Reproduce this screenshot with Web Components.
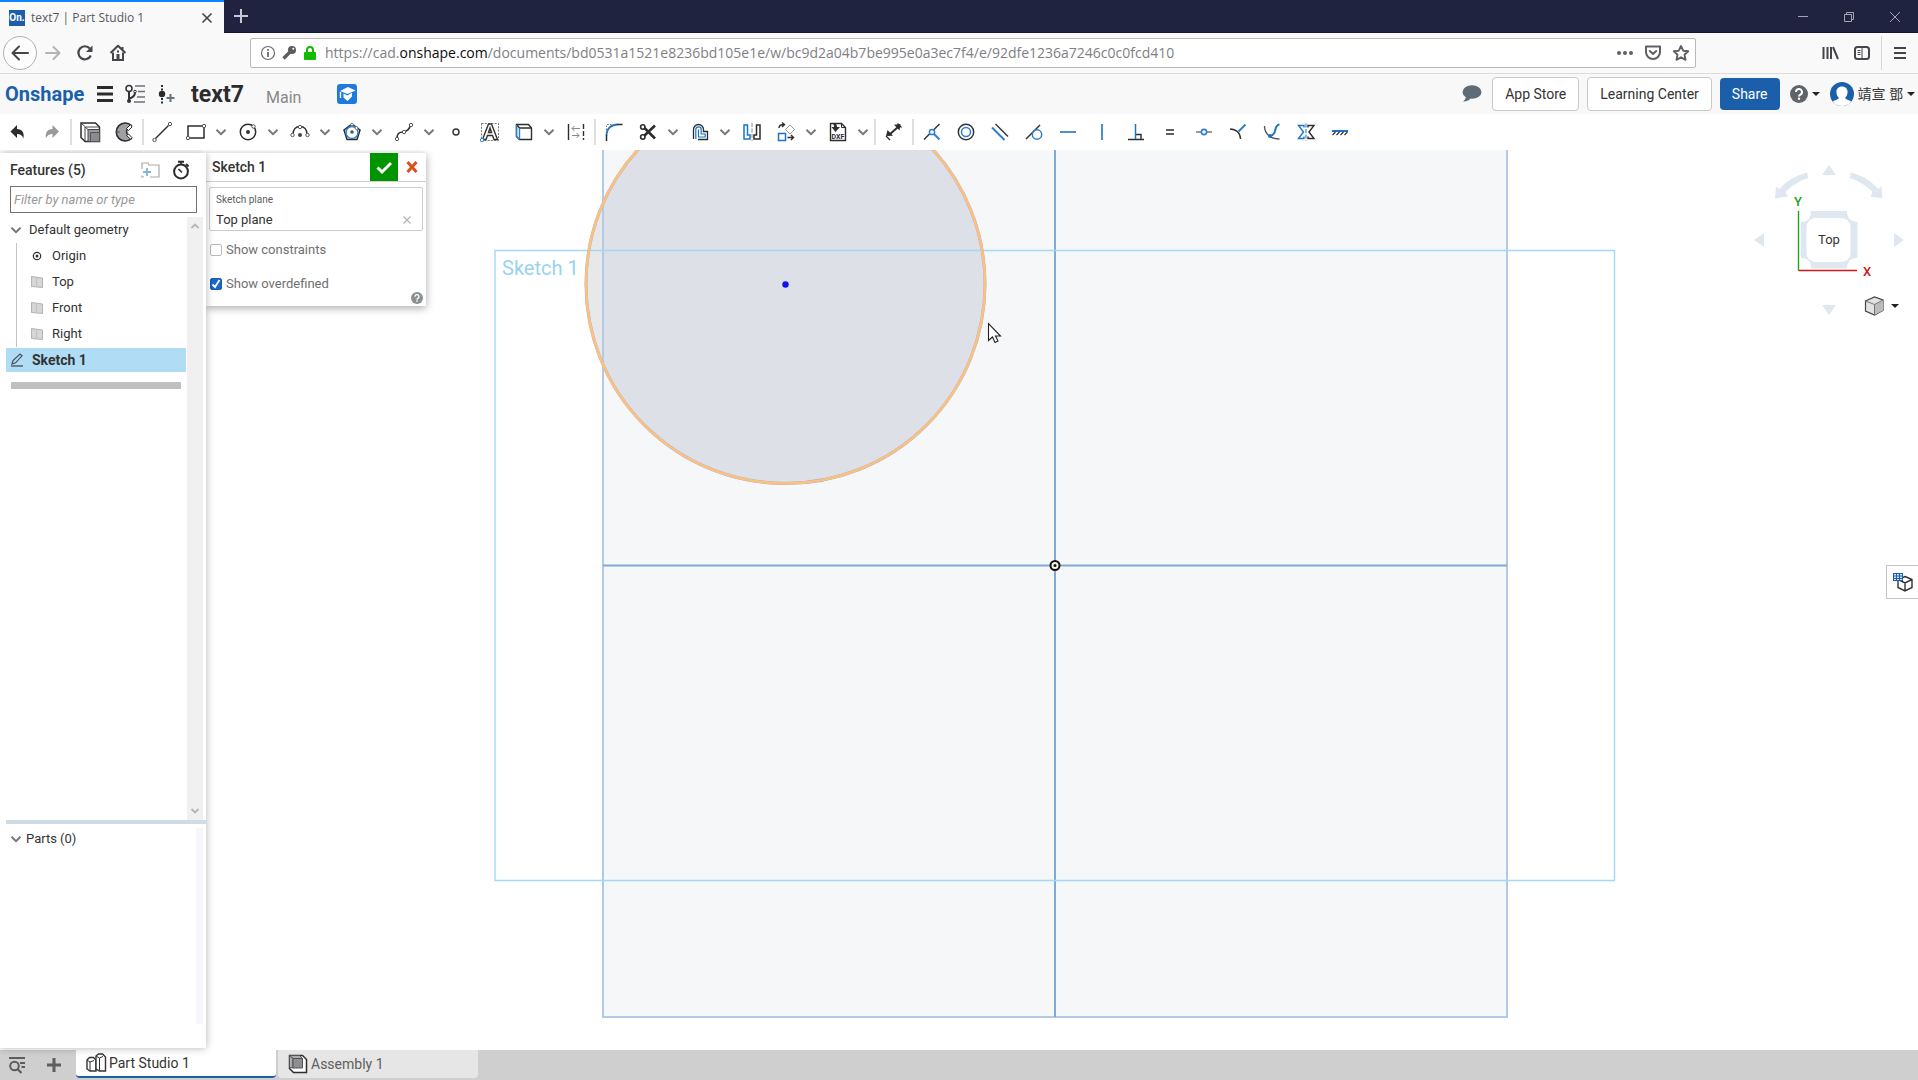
<!DOCTYPE html>
<html lang="en">
<head>
<meta charset="utf-8">
<title>text7 | Part Studio 1</title>
<style>
html, body { margin: 0; height: 100%; }
body { font: 14px/20px Roboto, "Noto Sans CJK TC", sans-serif; color: #333; background: #fff; overflow: hidden; }
</style>
</head>
<body>
<app-window></app-window>
<script>
const ICONS = {
  close: [12, '<path d="M1.5 1.5l9 9M10.5 1.5l-9 9" stroke="#444" stroke-width="1.6"/>'],
  plus: [16, '<path d="M8 1v14M1 8h14" stroke="#c8c8d0" stroke-width="2"/>'],
  min: [12, '<path d="M1 5.5h10" stroke="#a4a5b2"/>'],
  restore: [12, '<path d="M1.5 3.5h7v7h-7zM3.5 3.500V1.500h7v7h-2" stroke="#a4a5b2"/>'],
  xwin: [12, '<path d="M1 1l10 10M11 1L1 11" stroke="#a4a5b2"/>'],
  back: [34, '<circle cx="17" cy="17" r="16.500" fill="#fcfcfc" stroke="#b1b1b3"/><path d="M25 17H10M16 10.500L9.500 17l6.500 6.500" stroke="#45454a" stroke-width="2" stroke-linecap="round" stroke-linejoin="round"/>'],
  fwd: [16, '<path d="M1 8h13M8.500 2l6 6-6 6" stroke="#b4b4b7" stroke-width="2" stroke-linecap="round" stroke-linejoin="round"/>'],
  reload: [18, '<path d="M14.800 11.500A6.500 6.500 0 1 1 13.800 4.500" stroke="#45454a" stroke-width="2.200"/><path d="M16.500 1.500v6.500h-6.500z" fill="#45454a"/>'],
  home: [18, '<path d="M1.500 9L9 1.800 16.500 9M13.500 3v3" stroke="#45454a" stroke-width="2" stroke-linejoin="round"/><path d="M4 8.500V16h10V8.500" stroke="#45454a" stroke-width="2"/><rect x="7.500" y="10" width="3" height="6" fill="#45454a"/><rect x="8" y="6.500" width="2" height="2" fill="#45454a"/>'],
  info: [16, '<circle cx="8" cy="8" r="6.500" stroke="#6a6a6a" stroke-width="1.200"/><path d="M8 7v5M8 4v1.700" stroke="#6a6a6a" stroke-width="1.800"/>'],
  key: [16, '<circle cx="11" cy="5" r="4" fill="#5c5c60"/><path d="M8.500 7.500L2.500 13.500" stroke="#5c5c60" stroke-width="3.400"/><circle cx="12.300" cy="3.800" r="1" fill="#fff"/>'],
  lock: [16, '<path d="M5 8V5a3 3 0 0 1 6 0v3" stroke="#12bc00" stroke-width="2"/><rect x="2" y="7" width="12" height="8" rx="1" fill="#12bc00"/>'],
  dots: [18, '<g fill="#606064"><circle cx="3" cy="9" r="2"/><circle cx="9" cy="9" r="2"/><circle cx="15" cy="9" r="2"/></g>'],
  pocket: [18, '<path d="M2 2.500h14V8a7 7 0 0 1-14 0z" stroke="#606064" stroke-width="2" stroke-linejoin="round"/><path d="M5.800 7L9 10l3.200-3" stroke="#606064" stroke-width="2" stroke-linecap="round"/>'],
  star: [18, '<path d="M9 2l2.200 4.700 5 .6-3.700 3.500 1 5L9 13.300 4.500 15.800l1-5L1.800 7.300l5-.6z" stroke="#606064" stroke-width="1.900" stroke-linejoin="round"/>'],
  library: [18, '<path d="M2.500 3v12M6.500 3v12M10 3v12M12 3l5 12" stroke="#45454a" stroke-width="2"/>'],
  sidebar: [18, '<rect x="2" y="3" width="14" height="12" rx="2.500" stroke="#45454a" stroke-width="2"/><path d="M9 3v12M4.500 6.500h3M4.500 8.500h3M4.500 10.500h3" stroke="#45454a"/>'],
  menu: [16, '<path d="M2 3h12M2 8h12M2 13h12" stroke="#45454a" stroke-width="2"/>'],
  burger: [18, '<path d="M1 2.500h16M1 9h16M1 15.500h16" stroke="#2c2c2c" stroke-width="3"/>'],
  tree: [20, '<circle cx="4" cy="4.500" r="3" stroke="#333" stroke-width="1.500"/><circle cx="10" cy="7.500" r="1.300" stroke="#333"/><path d="M4 7.500V17M4 14.500c4-1 6-3 6-6" stroke="#333" stroke-width="2"/><circle cx="4" cy="17" r="2" fill="#333"/><path d="M10 2h10M13 7.500h7M12 13h8M9 18h11" stroke="#687078" stroke-width="1.600"/>'],
  insert: [20, '<circle cx="6" cy="10" r="3.200" fill="#2c2c2c"/><path d="M6 1v2M6 4.500v2M6 14v2M6 17.500v2" stroke="#2c2c2c" stroke-width="2"/><path d="M14.500 10v8M10.500 14h8" stroke="#687078" stroke-width="2"/>'],
  edu: [20, '<rect width="20" height="20" rx="3" fill="#1f7ae0"/><path d="M11 3l7.500 3.500-8 3.500L3 7z" fill="#fff"/><path d="M6.500 9.500v4L10.500 17l4.500-4.500v-4L10.500 11.500z" fill="#fff"/><path d="M3.500 8v6" stroke="#fff" stroke-width="1.400"/>'],
  bubble: [20, '<ellipse cx="10" cy="8" rx="9.500" ry="6.800" fill="#5f6b76"/><path d="M4 12c0 2-1 4-3 5.500 4 0 7-1.500 8-4z" fill="#5f6b76"/>'],
  help: [18, '<circle cx="9" cy="9" r="9" fill="#5f6469"/><path d="M6 7a3 3 0 1 1 4.400 2.600c-1 .6-1.400 1-1.400 1.900" stroke="#fff" stroke-width="2"/><rect x="7.900" y="12.600" width="2.200" height="2.200" fill="#fff"/>'],
  caret: [8, '<path d="M0 2h8L4 6z" fill="#222"/>'],
  avatar: [24, '<circle cx="12" cy="12" r="12" fill="#1b5faa"/><path d="M12 4.500c3.500 0 5.600 2.400 5.600 5.500 0 2.600-1.200 4.600-2.400 5.700 0 2 4.300 2 6 4A12 12 0 0 1 12 24a12 12 0 0 1-9.200-4.300c1.700-2 6-2 6-4-1.200-1.100-2.400-3.100-2.400-5.700 0-3.100 2.100-5.500 5.600-5.500z" fill="#fff"/>'],
  undo: [24, '<path d="M4.500 11.500L11 5v4c5 0 7.500 3.500 6.500 9.500C16.500 15.500 14.500 14 11 14v4z" fill="#2d2d2d"/>'],
  redo: [24, '<path d="M19 11.500L12.500 5v4c-5 0-7.500 3.500-6.500 9.500 1-3 3-4.500 6.500-4.500v4z" fill="#999"/>'],
  extrude: [24, '<path d="M3 3h14.500L21.500 7v14.500H7L3 17.500z" fill="#fff" stroke="#2d2d2d" stroke-width="1.500"/><path d="M3 3l4.500 4M7.500 7h14M7 7v14M7 7l3 2.500" stroke="#444"/><path d="M10 9.500h11.500v12H10z" fill="#9b9b9f" stroke="#444"/><path d="M12.500 12.500h9v9h-9z" fill="#8b8b8f" stroke="#555"/>'],
  revolve: [24, '<path d="M19.500 5.500A9 9 0 1 0 19.500 18.500l-3.500-3.800a3.800 3.800 0 0 1-.500-5.400z" fill="#a0a0a4" stroke="#2d2d2d" stroke-width="1.600" stroke-linejoin="round"/><path d="M14.500 8.500l4-4 1.500 2.500-3.500 3.500zM14.500 15.500l2-1.500 3.500 3.500-1 2z" fill="#fff" stroke="#2d2d2d"/><path d="M4 12h4" stroke="#555"/>'],
  line: [24, '<path d="M5.500 18.500l13-13" stroke="#2d2d2d" stroke-width="1.500"/><g fill="#fff" stroke="#555"><circle cx="4.500" cy="20" r="1.700"/><circle cx="20" cy="4" r="1.700"/></g>'],
  rect: [24, '<path d="M4 6h16v12H4z" stroke="#2d2d2d" stroke-width="1.500"/><g fill="#fff" stroke="#555"><circle cx="4" cy="18" r="1.700"/><circle cx="20" cy="6" r="1.700"/></g>'],
  circle: [24, '<circle cx="12" cy="12" r="7.700" stroke="#2d2d2d" stroke-width="1.500"/><circle cx="12" cy="12" r="2" fill="#333"/><circle cx="17.500" cy="6.500" r="1.700" fill="#fff" stroke="#555"/>'],
  arc: [24, '<path d="M5 14.500c0-5 3-8 7-8s7 3 7 8" stroke="#2d2d2d" stroke-width="1.500"/><g fill="#fff" stroke="#555"><circle cx="4.500" cy="15" r="1.700"/><circle cx="19.500" cy="15" r="1.700"/><circle cx="12" cy="7" r="1.700"/></g><circle cx="12" cy="15" r="2" fill="#444"/>'],
  polygon: [24, '<path d="M12 4l8 6-3 9.500H7L4 10z" stroke="#2d2d2d" stroke-width="1.500"/><circle cx="12" cy="12.500" r="6" stroke="#2b7fd0" stroke-width="1.500"/><circle cx="12" cy="12" r="1.800" fill="#555"/><circle cx="12" cy="4.500" r="1.300" fill="#fff" stroke="#777"/><circle cx="16.500" cy="8" r="1.500" fill="#fff" stroke="#777"/>'],
  spline: [24, '<path d="M5 18.500c0-8 6-6 8-7s4-1 5.500-6.500" stroke="#2d2d2d" stroke-width="1.500"/><g fill="#fff" stroke="#555"><circle cx="5" cy="19" r="1.700"/><circle cx="12" cy="12" r="1.700"/><circle cx="19" cy="5" r="1.700"/></g>'],
  point: [24, '<circle cx="12" cy="12" r="3" stroke="#333" stroke-width="1.400"/>'],
  text: [24, '<path d="M3.500 3.500h17v17h-17z" stroke="#777" stroke-dasharray="2 1.300"/><path d="M10.500 4h3l6 15.500h-3.500l-1.500-4h-5l-1.500 4H4.500zM12 8l-1.500 4.500h3z" fill="#fff" stroke="#333" stroke-width="1.400"/><circle cx="4" cy="20" r="1.700" fill="#fff" stroke="#2b7fd0"/>'],
  box: [24, '<path d="M4.500 4.500h12l3 3.500v11.500h-12l-3-3z" stroke="#2d2d2d" stroke-width="1.400"/><path d="M7.500 8h12M4.500 4.500l3 3.500" stroke="#2d2d2d" stroke-width="1.400"/><path d="M7.500 8v11.500M4.500 5v11.500l3 3" stroke="#2b7fd0" stroke-width="1.400"/>'],
  dims: [24, '<path d="M4.500 4v16" stroke="#2d2d2d" stroke-width="1.400"/><path d="M19.500 4v16" stroke="#2d2d2d" stroke-width="1.400" stroke-dasharray="5 2"/><path d="M8 8.500h8M10.500 6L8 8.500l2.500 2.500M8 15.500h7M12.500 13l2.500 2.500-2.500 2.500" stroke="#888"/>'],
  fillet: [24, '<path d="M4.500 15.500c0-7 5-11 11-11" stroke="#1b75c4" stroke-width="1.900"/><path d="M4.500 15v6M15 4.500h5.500" stroke="#2d2d2d" stroke-width="1.500"/><path d="M4.500 13V4.500H13" stroke="#777" stroke-dasharray="1.500 1.500"/>'],
  trim: [24, '<path d="M8.500 8l10.500 10.500M8.500 15.500L19 5.500" stroke="#2d2d2d" stroke-width="2.600"/><circle cx="6.800" cy="7" r="2.200" stroke="#2d2d2d" stroke-width="1.600"/><circle cx="6.800" cy="17" r="2.200" stroke="#2d2d2d" stroke-width="1.600"/>'],
  offset: [24, '<path d="M5.500 19V9.500a5 5 0 0 1 10 0V11.500h4v8H10" stroke="#2d2d2d" stroke-width="1.300"/><path d="M7.800 19V9.500a2.700 2.700 0 0 1 5.400 0V14h4v3h-6.700V9.500" stroke="#1b75c4" stroke-width="1.200"/>'],
  mirror: [24, '<path d="M4 5h3.500v10H10v4H4z" stroke="#1b75c4" stroke-width="1.500"/><path d="M20 5h-3.500v10H14v4h6z" stroke="#2d2d2d" stroke-width="1.500"/><path d="M12 3v18" stroke="#888" stroke-dasharray="4 1.500"/>'],
  transform: [24, '<path d="M4.500 13.500h7v7h-7z" stroke="#1b75c4" stroke-width="1.500"/><path d="M16 5l4.500 4.500L16 14l-4.500-4.500z" stroke="#999"/><path d="M5 8c0-3 2-3.500 5-3.500M8 2.500l2.500 2L8 7M13.500 17.500h6M17 15l2.500 2.500L17 20" stroke="#2d2d2d" stroke-width="1.400"/>'],
  dxf: [24, '<path d="M4.500 3.500h11l4 4v13h-15z" stroke="#2d2d2d" stroke-width="1.400"/><path d="M15.500 3.500v4h4" stroke="#2d2d2d"/><path d="M6.500 3c3 0 4.500 1 4.500 4h3l-4.500 5L5.500 7H8c0-2-.500-2.500-1.500-4z" fill="#2d2d2d"/><text x="5.500" y="19" font-family="Roboto" font-weight="700" font-size="7" fill="#2d2d2d">DXF</text>'],
  dimension: [24, '<path d="M7 15l9-8" stroke="#2d2d2d" stroke-width="2"/><path d="M4 16l1.500-6 5.500 5.800zM18.500 4l-1 6.500-5.500-5.800z" fill="#2d2d2d"/><path d="M4 16l4 4M15.500 3.500l4 4" stroke="#2d2d2d" stroke-width="1.300"/>'],
  coincident: [24, '<path d="M4 19.500L19.500 4" stroke="#333" stroke-width="1.400"/><path d="M12 12l7.500 7.500" stroke="#2b7fd0" stroke-width="2"/><circle cx="12" cy="12" r="2.600" fill="#fff" stroke="#2b7fd0" stroke-width="1.500"/>'],
  concentric: [24, '<circle cx="12" cy="12" r="7.700" stroke="#333" stroke-width="1.500"/><circle cx="12" cy="12" r="4.500" stroke="#2b7fd0" stroke-width="1.500"/>'],
  parallel: [24, '<path d="M4 7.500L16.500 20" stroke="#2b7fd0" stroke-width="2"/><path d="M7.500 4L20 16.500" stroke="#333" stroke-width="1.400"/>'],
  tangent: [24, '<path d="M4 19L18 5" stroke="#333" stroke-width="1.500"/><circle cx="15" cy="14.500" r="4.700" stroke="#2b7fd0" stroke-width="1.500"/>'],
  horizontal: [24, '<path d="M4 12h16" stroke="#4a90d9" stroke-width="2"/>'],
  vertical: [24, '<path d="M12 4v16" stroke="#4a90d9" stroke-width="2"/>'],
  perp: [24, '<path d="M4 19.500h16M12 14.500h5v5" stroke="#2d2d2d" stroke-width="1.400"/><path d="M11.500 4v15" stroke="#1b75c4" stroke-width="1.500"/>'],
  equal: [24, '<path d="M8 10h8M8 14h8" stroke="#2d2d2d" stroke-width="1.400"/>'],
  midpoint: [24, '<path d="M4 12h16" stroke="#999" stroke-width="2"/><circle cx="12" cy="12" r="2.600" fill="#fff" stroke="#2b7fd0" stroke-width="1.600"/>'],
  normal: [24, '<path d="M4 9c6 0 10.500 4 10.500 10" stroke="#333" stroke-width="1.400"/><path d="M12.500 11.500l7-7" stroke="#2b7fd0" stroke-width="2"/>'],
  pierce: [24, '<path d="M4.500 6c0 5 2 8 5 10M9.500 16c3 3 6 3 10 3" stroke="#555" stroke-width="1.400"/><path d="M10 16c8-1 3-11 9.500-11.500" stroke="#1b75c4" stroke-width="2"/><circle cx="10" cy="16" r="2" fill="#1b75c4"/>'],
  symmetric: [24, '<path d="M10 7.500V5.500H4.500L9.500 12l-5 6.500H10v-2" stroke="#1b75c4" stroke-width="1.400"/><path d="M14 7.500V5.500h6L15 12l5 6.500h-6v-2" stroke="#2d2d2d" stroke-width="1.400"/><path d="M12 3.500v17" stroke="#1b75c4" stroke-dasharray="4 1.500"/>'],
  fix: [24, '<path d="M4 11h16" stroke="#1b75c4" stroke-width="2"/><path d="M7.500 12l-3 3M11.500 12l-3 3M15.500 12l-3 3M19.500 12l-3 3" stroke="#333" stroke-width="1.200"/>'],
  chev: [12, '<path d="M1.500 3.800L6 8.200l4.500-4.400" stroke="#777" stroke-width="2"/>'],
  chevup: [10, '<path d="M1.500 7L5 3.500 8.500 7" stroke="#b5b5b5" stroke-width="1.800"/>'],
  chevdn: [10, '<path d="M1.500 3L5 6.500 8.500 3" stroke="#b5b5b5" stroke-width="1.800"/>'],
  folder: [20, '<path d="M2 9V3h6l1 2h10v12h-9M2 15.500V17h2" stroke="#aaa" stroke-width="1.200"/><path d="M7 8v8M3 12h8" stroke="#7fb4e0" stroke-width="1.800"/>'],
  watch: [20, '<circle cx="10" cy="11.500" r="6.900" stroke="#2a2a2a" stroke-width="2"/><path d="M7 1.800h6M15 4l2.500 2.500" stroke="#2a2a2a" stroke-width="2"/><path d="M10 1.500V4M7.500 9l3.500 3.500" stroke="#2a2a2a" stroke-width="1.600"/>'],
  origin: [12, '<circle cx="6" cy="6" r="3.700" stroke="#333" stroke-width="1.200"/><circle cx="6" cy="6" r="1.500" fill="#333"/>'],
  plane: [14, '<path d="M1.500 1.500l11 1.500v9.500l-11-1z" fill="#d6d6d6" stroke="#b4b4b4"/><path d="M6.500 2.500v9.500" stroke="#c2c2c2"/>'],
  pencil: [14, '<path d="M2 11l1-3.500L10 1l2 1.800L5.500 9.800z" stroke="#44505c" stroke-width="1.200"/><path d="M1 13h12" stroke="#44505c" stroke-width="1.300"/>'],
  check: [18, '<path d="M2.500 9.500l4.500 4.500L16 5" stroke="#fff" stroke-width="3"/>'],
  cross: [14, '<path d="M2.500 2l9 10M11.500 2l-9 10" stroke="#d9501e" stroke-width="3"/>'],
  clear: [10, '<path d="M1.500 1.500l7 7M8.500 1.500l-7 7" stroke="#b5b5b5" stroke-width="1.200"/>'],
  find: [18, '<path d="M1 2h16M12 7h5M13.500 11h3.500" stroke="#5d5d5d" stroke-width="1.800"/><circle cx="6.500" cy="10" r="4.300" stroke="#5d5d5d" stroke-width="2"/><path d="M9.500 13l4 4" stroke="#5d5d5d" stroke-width="2.200"/>'],
  add: [16, '<path d="M8 1v14M1 8h14" stroke="#5d5d5d" stroke-width="3"/>'],
  studio: [20, '<path d="M1 7l2.500-2.500h4L10 7v11H4L1 16z" fill="#fff" stroke="#333" stroke-width="1.400"/><path d="M1 7l3 2v9M4 9l4-1.500" stroke="#333"/><path d="M10 3l2.500-2h4l3 3v14h-6L10 16z" fill="#fff" stroke="#333" stroke-width="1.400"/><path d="M10 3l3.500 2v13M13.500 5l3.500-1.500" stroke="#333"/>'],
  assembly: [20, '<path d="M1.500 1.500h13l4 4v13h-13l-4-4z" fill="#fff" stroke="#2d2d2d" stroke-width="1.500"/><path d="M1.500 1.500l3.500 3V14l-3.500-.500z" fill="#aaa" stroke="#555"/><path d="M1.500 1.500h10l3 3H5z" fill="#aaa" stroke="#555"/><path d="M5 4.500h9.500V14H5z" fill="#8f8f93" stroke="#555"/>'],
  table: [20, '<path d="M12 4.500l7 3v8L12 19l-7-3.500v-8zM5 7.500l7 3.500 7-3.500M12 11v8" fill="#fff" stroke="#333" stroke-width="1.400"/><rect x="0" y="1" width="10" height="8" fill="#1b5faa"/><path d="M1 2h2v1.500h-2zM4 2h2v1.500h-2zM7 2h2v1.500H7zM1 4.500h2v1.500h-2zM4 4.500h2v1.500h-2zM7 4.500h2v1.500H7zM1 7h2v1h-2zM4 7h2v1h-2zM7 7h2v1H7z" fill="#cfe8ff"/>']
};

const define = (name, html, setup) => {
  const template = document.createElement('template');
  template.innerHTML = `<style>*{box-sizing:border-box}:host([hidden]){display:none}button{font:inherit;color:inherit;border:0;background:none;padding:0;margin:0;cursor:pointer}</style>${html}`;
  customElements.define(name, class extends HTMLElement {
    constructor() {
      super();
      this.attachShadow({ mode: 'open' }).append(template.content.cloneNode(true));
    }
    connectedCallback() { if (setup) setup(this, this.shadowRoot); }
  });
};

define('ui-icon', `<style>:host{display:block;flex:none}svg{display:block;overflow:visible}</style>`, (el, root) => {
  if (root.querySelector('svg')) return;
  const [size, body] = ICONS[el.getAttribute('name')];
  root.innerHTML += `<svg width="${size}" height="${size}" viewBox="0 0 ${size} ${size}" fill="none" aria-hidden="true">${body}</svg>`;
});

define('tool-button', `<style>
  :host{display:flex;flex:none;height:36px}
  button{display:flex;align-items:center;justify-content:center;width:34px}
  button.more{width:18px;padding-right:2px}
</style><button class="main"></button>`, (el, root) => {
  const name = el.getAttribute('icon');
  const main = root.querySelector('.main');
  main.innerHTML = `<ui-icon name="${name}"></ui-icon>`;
  main.setAttribute('aria-label', name);
  if (el.hasAttribute('menu') && !root.querySelector('.more')) {
    main.insertAdjacentHTML('afterend', `<button class="more" aria-label="${name} options"><ui-icon name="chev"></ui-icon></button>`);
  }
});

define('browser-tabs', `<style>
  :host{display:flex;height:33px;background:#20233f;border-bottom:1px solid #15172c;font:12px/16px "Open Sans",sans-serif}
  .tab{display:flex;align-items:center;gap:6px;width:224px;height:33px;padding:0 11px 0 9px;border-top:2px solid #0a84ff;background:#f9f9fa;color:#58585c}
  .fav{width:16px;height:16px;background:#1b5faa;color:#fff;font:700 10px/16px Roboto,sans-serif;text-align:center;overflow:hidden}
  .title{flex:1}
  .new{width:44px;display:grid;place-items:center;padding-right:10px}
  .win{margin-left:auto;display:flex;padding-top:2px}
  .win button{width:46px;display:grid;place-items:center}
</style>
<div class="tab"><span class="fav">On.</span><span class="title">text7 | Part Studio 1</span><button aria-label="Close tab"><ui-icon name="close"></ui-icon></button></div>
<button class="new" aria-label="New tab"><ui-icon name="plus"></ui-icon></button>
<div class="win"><button aria-label="Minimize"><ui-icon name="min"></ui-icon></button><button aria-label="Restore"><ui-icon name="restore"></ui-icon></button><button aria-label="Close"><ui-icon name="xwin"></ui-icon></button></div>`);

define('browser-nav', `<style>
  :host{display:flex;align-items:center;height:41px;padding:0 10px 0 3px;background:#f9f9fa;border-bottom:1px solid #dcdcdc}
  .nav{display:flex;align-items:center;width:247px;gap:15px;flex:none}
  .nav button:nth-child(2){margin-left:-7px}
  .url{display:flex;align-items:center;gap:5px;width:1446px;flex:0 1 1446px;height:30px;padding:0 5px 0 9px;background:#fff;border:1px solid #b9b9b9;border-radius:2px}
  .addr{flex:1;margin-left:2px;font:14px/20px "Open Sans",sans-serif;color:#808084;white-space:nowrap;outline:0}
  b{font-weight:400;color:#0c0c0d}
  .page{display:flex;gap:10px}
  .right{display:flex;align-items:center;margin-left:auto;gap:10px}
  .right i{width:1px;height:34px;background:#d7d7db}
  .right button:first-child{margin-right:4px}
</style>
<div class="nav"><button aria-label="Back"><ui-icon name="back"></ui-icon></button><button aria-label="Forward"><ui-icon name="fwd"></ui-icon></button><button aria-label="Reload"><ui-icon name="reload"></ui-icon></button><button aria-label="Home"><ui-icon name="home"></ui-icon></button></div>
<div class="url"><ui-icon name="info"></ui-icon><ui-icon name="key"></ui-icon><ui-icon name="lock"></ui-icon>
<div class="addr" role="textbox" aria-label="Address" contenteditable="true" spellcheck="false">https://cad.<b>onshape.com</b>/documents/bd0531a1521e8236bd105e1e/w/bc9d2a04b7be995e0a3ec7f4/e/92dfe1236a7246c0c0fcd410</div>
<div class="page"><button aria-label="Page actions"><ui-icon name="dots"></ui-icon></button><button aria-label="Pocket"><ui-icon name="pocket"></ui-icon></button><button aria-label="Bookmark"><ui-icon name="star"></ui-icon></button></div></div>
<div class="right"><button aria-label="Library"><ui-icon name="library"></ui-icon></button><button aria-label="Sidebars"><ui-icon name="sidebar"></ui-icon></button><i></i><button aria-label="Menu"><ui-icon name="menu"></ui-icon></button></div>`);

define('doc-header', `<style>
  :host{display:flex;align-items:center;height:40px;padding:0 3px 0 5px;background:#f8f8f8}
  .logo{width:91px;font:700 20px/24px Roboto,sans-serif;color:#1b5faa;text-decoration:none}
  .left{display:flex;align-items:center}
  .left button{margin-right:11px}
  h1{margin:0 0 0 4px;width:75px;padding-top:2px;font:700 23px/26px Roboto,sans-serif;color:#2c2c2c}
  .branch{width:71px;font-size:16px;line-height:20px;color:#888;padding-top:8px}
  .right{display:flex;align-items:center;margin-left:auto;gap:8px}
  .btn{height:34px;padding:0 12px;border:1px solid #c8c8c8;border-radius:4px;background:#fff;color:#333}
  .btn.share{height:32px;border:0;background:#1b5faa;color:#fff}
  .menu{display:flex;align-items:center;gap:4px}
  .bubble{margin-right:2px}
  .help{margin:0 2px}
</style>
<div class="left"><a class="logo" href="#">Onshape</a>
<button aria-label="Menu"><ui-icon name="burger"></ui-icon></button><button aria-label="Versions"><ui-icon name="tree"></ui-icon></button><button aria-label="Create version"><ui-icon name="insert"></ui-icon></button>
<h1>text7</h1><span class="branch">Main</span><ui-icon name="edu"></ui-icon></div>
<div class="right"><button class="bubble" aria-label="Comments"><ui-icon name="bubble"></ui-icon></button><button class="btn">App Store</button><button class="btn">Learning Center</button><button class="btn share">Share</button>
<button class="menu help" aria-label="Help"><ui-icon name="help"></ui-icon><ui-icon name="caret"></ui-icon></button>
<button class="menu"><ui-icon name="avatar"></ui-icon><span>靖宣 鄧</span><ui-icon name="caret"></ui-icon></button></div>`);

define('sketch-toolbar', `<style>
  :host{display:flex;height:36px;padding-left:1px;background:#fff}
  i{flex:none;width:2px;height:26px;margin:5px 1px;background:#dedede}
</style>`, (el, root) => {
  if (root.querySelector('tool-button')) return;
  const tools = 'undo redo | extrude revolve | line rect+ circle+ arc+ polygon+ spline+ point text box+ dims | fillet trim+ offset+ mirror transform+ dxf+ | dimension | coincident concentric parallel tangent horizontal vertical perp equal midpoint normal pierce symmetric fix';
  root.innerHTML += tools.split(' ').map(t => t === '|' ? '<i></i>' :
    `<tool-button icon="${t.replace('+', '')}"${t.endsWith('+') ? ' menu' : ''}></tool-button>`).join('');
});

define('feature-row', `<style>
  :host{display:flex;align-items:center;gap:8px;height:26px;padding-left:13px;border-left:1px solid #c4c4c4;margin-left:10px;white-space:nowrap}
  .ic{width:14px;display:grid;place-items:center}
  :host([root]){gap:6px;padding-left:3px;margin-left:0;border:0}
  :host([active]){height:24px;margin:1px 0 0;padding-left:4px;border:0;background:#b0ddf5;font-size:14px;font-weight:700}
</style><span class="ic"></span><slot></slot>`, (el, root) => {
  root.querySelector('.ic').innerHTML = `<ui-icon name="${el.getAttribute('icon')}"></ui-icon>`;
});

define('scroll-rail', `<style>
  :host{display:flex;flex-direction:column;justify-content:space-between;align-items:center;width:16px;padding:4px 0;background:#f0f0f0}
</style><ui-icon name="chevup"></ui-icon><ui-icon name="chevdn"></ui-icon>`);

define('feature-panel', `<style>
  :host{display:flex;flex-direction:column;width:206px;flex:none;margin:3px 0 2px;background:#fff;box-shadow:0 0 8px rgba(0,0,0,.3);z-index:1;font-size:13px}
  header{display:flex;align-items:center;height:33px;padding:0 15px 0 10px;gap:11px}
  h2{flex:1;margin:0;font-size:14px;line-height:20px;font-weight:500}
  input{height:27px;margin:0 9px 4px 10px;padding:0 3px;border:1px solid #707070;font:italic 13px/20px Roboto,sans-serif;color:#333;outline:0}
  input::placeholder{color:#999;opacity:1}
  .list{display:flex;flex:1;padding:0 3px 0 6px}
  .tree{flex:1}
  .bar{height:7px;margin:10px 5px 0;background:#c0c0c0}
  .split{height:4px;margin-left:6px;background:#cfdce6}
  .parts{display:flex;height:224px;padding:4px 3px 24px 10px}
  .parts button{display:flex;align-items:center;gap:4px;height:22px;flex:1}
  .rail{width:7px;background:#f5f7fa}
  scroll-rail{margin-left:1px}
</style>
<header><h2>Features (5)</h2><button aria-label="New folder"><ui-icon name="folder"></ui-icon></button><button aria-label="Rebuild time"><ui-icon name="watch"></ui-icon></button></header>
<input type="text" placeholder="Filter by name or type" aria-label="Filter by name or type">
<div class="list"><div class="tree">
<feature-row root icon="chev">Default geometry</feature-row><feature-row icon="origin">Origin</feature-row><feature-row icon="plane">Top</feature-row><feature-row icon="plane">Front</feature-row><feature-row icon="plane">Right</feature-row><feature-row active icon="pencil">Sketch 1</feature-row>
<div class="bar"></div></div><scroll-rail></scroll-rail></div>
<div class="split"></div>
<div class="parts"><button><ui-icon name="chev"></ui-icon>Parts (0)</button><div class="rail"></div></div>`);

define('check-option', `<style>
  :host{display:block}
  label{display:flex;align-items:center;gap:4px;height:20px;color:#707070}
  .box{display:grid;width:12px;height:12px}
  .box>*{grid-area:1/1}
  input{appearance:none;width:12px;height:12px;margin:0;border:1px solid #bbb;border-radius:2px;background:#fff}
  input:checked{background:#1b66c9;border-color:#1b5faa}
  svg{visibility:hidden;pointer-events:none}
  input:checked+svg{visibility:visible}
</style><label><span class="box"><input type="checkbox"><svg width="12" height="12" fill="none"><path d="M2.500 6.500L5 9l4.500-7" stroke="#fff" stroke-width="1.800"/></svg></span><slot></slot></label>`, (el, root) => {
  root.querySelector('input').checked = el.hasAttribute('checked');
});

define('sketch-dialog', `<style>
  :host{display:block;width:220px;height:153px;background:#fff;box-shadow:0 2px 8px rgba(0,0,0,.35);font-size:13px}
  header{display:flex;align-items:center;height:29px;padding-left:6px;border-bottom:1px solid #d0d0d0}
  h2{flex:1;margin:0;font-size:14px;line-height:20px;font-weight:500}
  header button{width:28px;height:28px;display:grid;place-items:center}
  .ok{background:#009400}
  .plane{margin:5px 3px 9px;height:44px;padding:2px 6px 0;border:1px solid #ccc;border-radius:2px}
  small{display:block;font-size:10px;line-height:20px;color:#606060}
  .value{display:flex;align-items:center;justify-content:space-between;padding-right:4px}
  check-option{margin:0 4px 14px}
  footer{display:flex;justify-content:flex-end;padding-right:3px;margin-top:-16px}
  svg{display:block}
</style>
<header><h2>Sketch 1</h2><button class="ok" aria-label="Accept"><ui-icon name="check"></ui-icon></button><button aria-label="Cancel"><ui-icon name="cross"></ui-icon></button></header>
<div class="plane"><small>Sketch plane</small><div class="value">Top plane<button aria-label="Clear"><ui-icon name="clear"></ui-icon></button></div></div>
<check-option>Show constraints</check-option><check-option checked>Show overdefined</check-option>
<footer><button aria-label="Help"><svg width="12" height="12" viewBox="0 0 18 18" fill="none"><circle cx="9" cy="9" r="9" fill="#8b8f92"/><path d="M6 7a3 3 0 1 1 4.400 2.600c-1 .6-1.400 1-1.400 1.900" stroke="#fff" stroke-width="2"/><rect x="7.900" y="12.600" width="2.200" height="2.200" fill="#fff"/></svg></button></footer>`);

define('view-cube', `<style>:host{display:block}svg{display:block}</style>
<svg width="198" height="180" viewBox="0 0 198 180" fill="none" font-family="Roboto, sans-serif">
<g fill="#dfe8f0"><path d="M109 15l7 10h-14zM109 165l7-10h-14zM34 90l10-7v14zM184 90l-10-7v14z"/>
<path d="M87 22.500l1.500 5.500c-10 3-17 8-23 14l2.500 4.500-13 2 1-12 3.500 2.500c7-8 15-13 27.500-16.500zM131 22.500L129.500 28c10 3 17 8 23 14l-2 4.500 12 2-1-12-3.500 2.500c-7-8-14-13-27-16.500z"/>
<path d="M91 61h36c0 7 3 10 10.500 11v36c-7 0-10 3-10.500 10.500H91c0-7-3-10-10-10.500V72c7 0 10-4 10-11z"/></g>
<rect x="86.500" y="68" width="44" height="44" rx="9" fill="#fff"/>
<path d="M78.500 61v59.500" stroke="#18a818" stroke-width="1.400"/><path d="M78.500 120.500H137" stroke="#d01818" stroke-width="1.400"/>
<text x="98" y="94" font-size="13" fill="#333">Top</text>
<text x="74" y="56" font-size="13" font-weight="500" fill="#18a818">Y</text><text x="143" y="126" font-size="13" font-weight="500" fill="#d01818">X</text>
<path d="M145.500 151l9-4 8.500 3v10.500l-8.500 4.500-9-4z" fill="#e2e2e2" stroke="#444" stroke-width="1.200"/><path d="M154.500 154.500l8.500-4.500v10.500l-8.500 4.500z" fill="#bcbcbc"/><path d="M145.500 151l9 3.500 8.500-4.500M154.500 154.500V165" stroke="#777"/>
<path d="M171 154h8l-4 4z" fill="#222"/>
</svg>`);

define('sketch-canvas', `<style>
  :host{display:block;position:relative;flex:1;min-width:0;overflow:hidden;background:#fff}
  .scene{display:block;width:100%;height:100%}
  sketch-dialog{position:absolute;left:0;top:3px}
  view-cube{position:absolute;right:0;top:0}
  .side{position:absolute;right:0;top:415px;width:32px;height:34px;border:1px solid #c4c4c4;border-right:0;background:#fff;display:grid;place-items:center}
</style>
<svg class="scene" viewBox="206 150 1712 900" preserveAspectRatio="xMidYMid slice" fill="none">
<circle cx="785.500" cy="284" r="199.500" fill="#e6e8ea"/>
<path d="M603 100H1507V1017H603z" fill="#f5f7f9"/>
<clipPath id="p"><path d="M603 100H1507V1017H603z"/></clipPath>
<circle cx="785.500" cy="284" r="199.500" fill="#dde0e7" clip-path="url(#p)"/>
<path d="M603 100H1507V1017H603z" stroke="#b2cae4" stroke-width="2"/>
<path d="M1055 150V1017M603 565.500H1507" stroke="#80a9d7" stroke-width="2"/>
<path d="M495 250.500H1614.500V880.500H495z" stroke="#a2daf5" stroke-width="1.400"/>
<text x="502" y="275" font-family="Roboto, sans-serif" font-size="20" fill="#98d3f1">Sketch 1</text>
<circle cx="785.500" cy="284" r="199.500" stroke="#a9a4e8" stroke-width="3"/>
<circle cx="785.500" cy="284" r="199.500" stroke="#fcc27a" stroke-width="2.600"/>
<circle cx="785.500" cy="284.500" r="3.200" fill="#1212f0"/>
<circle cx="1055" cy="565.500" r="4.500" fill="#f5f5e8" stroke="#111" stroke-width="2"/><circle cx="1055" cy="565.500" r="1.500" fill="#111"/>
<path d="M988.500 323.500v17l4-3.500 2.500 5.500 3-1.500-2.500-5h5z" fill="#fff" stroke="#222" stroke-width="1.100"/>
</svg>
<view-cube></view-cube><sketch-dialog></sketch-dialog>
<button class="side" aria-label="Tables"><ui-icon name="table"></ui-icon></button>`);

define('doc-tabs', `<style>
  :host{display:flex;height:30px;background:#cfcfcf;padding-left:8px}
  .tool{width:38px;display:grid;justify-items:start;align-items:center}
  .tool+.tool{width:30px}
  .tab{display:flex;align-items:center;gap:3px;width:200px;height:28px;margin-right:2px;padding-left:10px;background:#e6e6e6;color:#606060;font-size:14px;border-radius:0 0 4px 4px}
  .tab.on{background:#fff;color:#333;border-bottom:2px solid #1b5faa}
</style>
<button class="tool" aria-label="Tab manager"><ui-icon name="find"></ui-icon></button><button class="tool" aria-label="Add tab"><ui-icon name="add"></ui-icon></button>
<button class="tab on"><ui-icon name="studio"></ui-icon>Part Studio 1</button><button class="tab"><ui-icon name="assembly"></ui-icon>Assembly 1</button>`);

define('app-window', `<style>
  :host{display:flex;flex-direction:column;height:100vh}
  main{display:flex;flex:1;min-height:0}
  sketch-toolbar{position:relative;z-index:2}
</style>
<browser-tabs></browser-tabs><browser-nav></browser-nav><doc-header></doc-header><sketch-toolbar></sketch-toolbar>
<main><feature-panel></feature-panel><sketch-canvas></sketch-canvas></main>
<doc-tabs></doc-tabs>`);
</script>
</body>
</html>
